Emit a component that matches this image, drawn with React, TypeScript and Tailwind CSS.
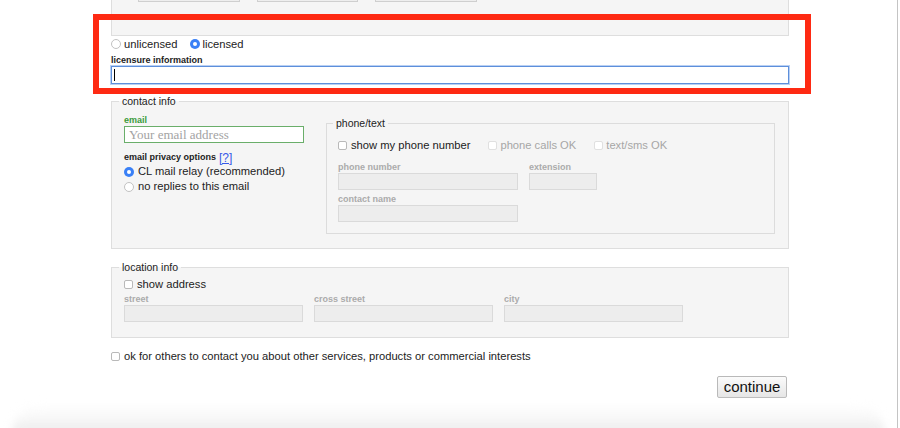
import React from "react";

function Radio({ checked }: { checked?: boolean }) {
  if (checked) {
    return (
      <span className="inline-flex h-[10px] w-[10px] shrink-0 items-center justify-center rounded-full bg-[#3a80f6]">
        <span className="h-[4px] w-[4px] rounded-full bg-white" />
      </span>
    );
  }
  return <span className="inline-block h-[10px] w-[10px] shrink-0 rounded-full border border-[#c2c2c2] bg-white" />;
}

function Check({ disabled }: { disabled?: boolean }) {
  return (
    <span
      className={
        disabled
          ? "inline-block h-[9px] w-[9px] shrink-0 rounded-[2px] border border-[#e0e0e0] bg-white"
          : "inline-block h-[9px] w-[9px] shrink-0 rounded-[2px] border border-[#b9b9b9] bg-white"
      }
    />
  );
}

function GrayLabel({ children }: { children: React.ReactNode }) {
  return <div className="h-[11px] text-[9px] leading-[11px] font-bold text-[#ababab]">{children}</div>;
}

function GrayInput({ w }: { w: string }) {
  return <div className={`h-[17px] ${w} border border-[#dadada] bg-[#ededed]`} />;
}

export default function App() {
  return (
    <div className="relative h-[428px] w-[900px] overflow-hidden bg-white font-['Liberation_Sans',Arial,sans-serif] text-[#222]">
      <div className="flex h-[428px] w-[898px] flex-col border-r border-[#c4c4c4]">
        <div className="ml-[111px] w-[678px]">
          {/* previous block, scrolled mostly out of view */}
          <div className="flex h-[36px] gap-[17px] border-x border-b border-[#dedede] bg-[#f5f5f5] pl-[26px]">
            <div className="h-[2px] w-[102px] border-x border-b border-[#cfcfcf] bg-[#eeeeee]" />
            <div className="h-[2px] w-[101px] border-x border-b border-[#cfcfcf] bg-[#eeeeee]" />
            <div className="h-[2px] w-[102px] border-x border-b border-[#cfcfcf] bg-[#eeeeee]" />
          </div>

          <div className="mt-[1px] flex h-[14px] items-center text-[11.2px]">
            <span className="flex items-center gap-[3px]">
              <Radio />
              unlicensed
            </span>
            <span className="ml-[12px] flex items-center gap-[3px]">
              <Radio checked />
              licensed
            </span>
          </div>

          <div className="mt-[4px] h-[11px] text-[9px] leading-[11px] font-bold">licensure information</div>
          <div className="flex h-[18px] items-center border border-[#5d8fdb] bg-white shadow-[0_0_0_1px_#b9d0f3]">
            <span className="ml-[2px] h-[12px] w-px bg-black" />
          </div>

          <fieldset className="mt-[11px] border border-[#dedede] bg-[#f5f5f5] pr-[13px] pb-[14px] pl-[12px]">
            <legend className="-ml-[5px] px-[3px] text-[10.5px] leading-[12px]">contact info</legend>
            <div className="flex">
              <div className="w-[180px] pt-[8px]">
                <div className="h-[11px] text-[9px] leading-[11px] font-bold text-[#3b9a3b]">email</div>
                <div className="flex h-[17px] items-center border border-[#6aae6a] bg-white pl-[4px] font-['Liberation_Serif','Times_New_Roman',serif] text-[13px] text-[#a3a3a3]">
                  Your email address
                </div>
                <div className="mt-[9px] flex h-[12px] items-center gap-[3px]">
                  <span className="text-[9px] font-bold">email privacy options</span>
                  <span className="text-[12px] text-[#3559e8] underline">[?]</span>
                </div>
                <div className="flex h-[15px] items-center gap-[4px] text-[11.2px]">
                  <Radio checked />
                  CL mail relay (recommended)
                </div>
                <div className="flex h-[15px] items-center gap-[4px] text-[11.2px]">
                  <Radio />
                  no replies to this email
                </div>
              </div>

              <fieldset className="mt-[10px] ml-[22px] flex-1 border border-[#dcdcdc] px-[11px] pb-[11px]">
                <legend className="-ml-[5px] px-[3px] text-[10.5px] leading-[12px]">phone/text</legend>
                <div className="mt-[9px] flex h-[14px] items-center gap-[18px] text-[11.2px]">
                  <span className="flex items-center gap-[4px]">
                    <Check />
                    show my phone number
                  </span>
                  <span className="flex items-center gap-[3px] text-[#a6a6a6]">
                    <Check disabled />
                    phone calls OK
                  </span>
                  <span className="flex items-center gap-[3px] text-[#a6a6a6]">
                    <Check disabled />
                    text/sms OK
                  </span>
                </div>
                <div className="mt-[10px] flex gap-[11px]">
                  <div>
                    <GrayLabel>phone number</GrayLabel>
                    <GrayInput w="w-[180px]" />
                  </div>
                  <div>
                    <GrayLabel>extension</GrayLabel>
                    <GrayInput w="w-[68px]" />
                  </div>
                </div>
                <div className="mt-[4px]">
                  <GrayLabel>contact name</GrayLabel>
                  <GrayInput w="w-[180px]" />
                </div>
              </fieldset>
            </div>
          </fieldset>

          <fieldset className="mt-[12px] border border-[#dedede] bg-[#f5f5f5] px-[12px] pb-[15px]">
            <legend className="-ml-[5px] px-[3px] text-[10.5px] leading-[12px]">location info</legend>
            <div className="mt-[4px] flex h-[14px] items-center gap-[4px] text-[11.2px]">
              <Check />
              show address
            </div>
            <div className="mt-[3px] flex gap-[11px]">
              <div>
                <GrayLabel>street</GrayLabel>
                <GrayInput w="w-[179px]" />
              </div>
              <div>
                <GrayLabel>cross street</GrayLabel>
                <GrayInput w="w-[179px]" />
              </div>
              <div>
                <GrayLabel>city</GrayLabel>
                <GrayInput w="w-[179px]" />
              </div>
            </div>
          </fieldset>

          <div className="mt-[11px] flex h-[14px] items-center gap-[4px] text-[11.2px]">
            <Check />
            ok for others to contact you about other services, products or commercial interests
          </div>

          <div className="mt-[13px] flex justify-end pr-[2px]">
            <button className="h-[22px] w-[70px] rounded-[2px] border border-[#b9b9b9] bg-gradient-to-b from-[#fbfbfb] to-[#e6e6e6] text-[15px] leading-[20px] text-[#111]">
              continue
            </button>
          </div>
        </div>

        <div className="mt-auto mx-[12px] -mb-[6px] h-[30px] rounded-t-[40px] bg-gradient-to-b from-white via-[#f8f8f8] to-[#e9e9e9] blur-[4px]" />
      </div>

      {/* red annotation box */}
      <div className="pointer-events-none absolute top-[14px] left-[93px] h-[80px] w-[718px] border-[6px] border-[#fe2a13]" />
    </div>
  );
}
